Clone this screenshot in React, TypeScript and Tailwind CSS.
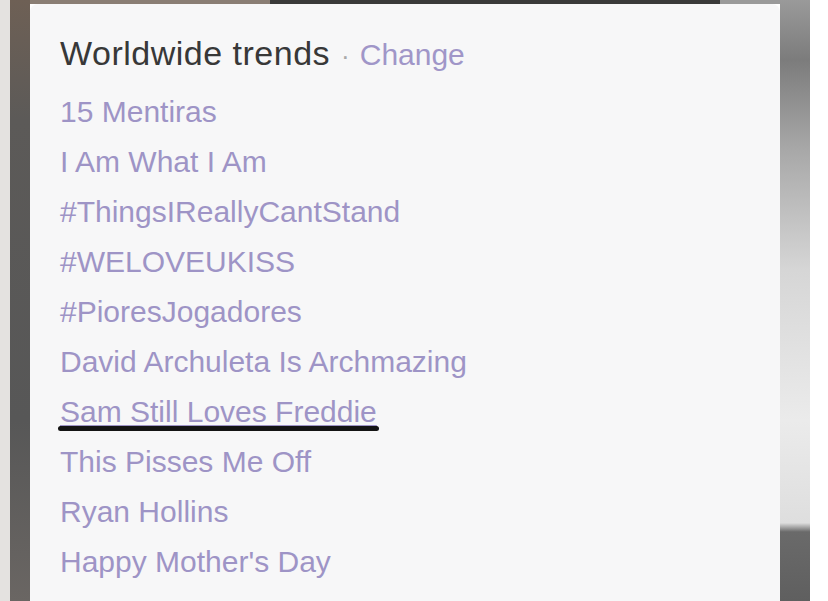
import React from "react";

const trends = [
  "15 Mentiras",
  "I Am What I Am",
  "#ThingsIReallyCantStand",
  "#WELOVEUKISS",
  "#PioresJogadores",
  "David Archuleta Is Archmazing",
  "Sam Still Loves Freddie",
  "This Pisses Me Off",
  "Ryan Hollins",
  "Happy Mother's Day",
];

export default function App() {
  return (
    <div className="w-[828px] h-[601px] overflow-hidden flex bg-white font-['Liberation_Sans',Arial,sans-serif]">
      {/* left photo edge */}
      <div className="w-[10px] bg-[#e4e2e0]" />
      <div className="w-[20px] bg-[linear-gradient(180deg,#6e6055_0%,#5c5a58_20%,#575757_70%,#6a6663_100%)]" />

      {/* middle column: photo strip on top, trends card below */}
      <div className="flex-1 flex flex-col">
        <div className="h-[4px] flex">
          <div className="w-[240px] bg-[#8a7e74]" />
          <div className="flex-1 bg-[#3a3a3a]" />
          <div className="w-[60px] bg-[#9a9a9a]" />
        </div>
        <div className="flex-1 bg-[#f7f7f8] rounded-t-[8px] pl-[30px] pt-[24px]">
          <div className="h-[50px] leading-[50px] text-[#383838] flex items-baseline">
            <span className="text-[34px] tracking-[0.5px]">Worldwide trends</span>
            <span className="text-[#a9a9a9] ml-[11px] mr-[10px] text-[26px]">·</span>
            <span className="text-[30px] text-[#a096c8]">Change</span>
          </div>
          <ul className="mt-[9px]">
            {trends.map((t) => (
              <li key={t} className="h-[50px] leading-[50px] text-[30px] text-[#9e94c6]">
                {t === "Sam Still Loves Freddie" ? (
                  <span className="relative inline-block underline decoration-[#9e94c6] decoration-1 underline-offset-[3px]">
                    {t}
                    <span className="absolute left-[-2px] right-[-2px] top-[39px] h-[5px] rounded-full bg-[#141414]" />
                  </span>
                ) : (
                  t
                )}
              </li>
            ))}
          </ul>
        </div>
      </div>

      {/* right photo edge */}
      <div className="w-[30px] bg-[linear-gradient(180deg,#9a9a9a_0%,#7c7c7c_10%,#a8a8a8_25%,#d6d6d6_45%,#ebebeb_70%,#dedede_87%,#6a6a6a_88.5%,#5f5f5f_100%)]" />
      <div className="w-[18px] bg-white" />
    </div>
  );
}
